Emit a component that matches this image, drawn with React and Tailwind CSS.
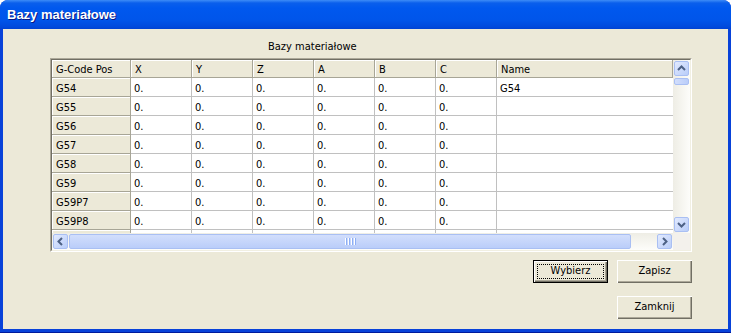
import React from "react";

const rows = ["G54", "G55", "G56", "G57", "G58", "G59", "G59P7", "G59P8"];
const cols = ["X", "Y", "Z", "A", "B", "C"];

const Chevron = ({ dir }) => {
  if (dir === "left" || dir === "right") {
    return (
      <svg width="9" height="11" viewBox="0 0 9 11">
        <path d={dir === "left" ? "M6 2 L2.5 5.5 L6 9" : "M3 2 L6.5 5.5 L3 9"} fill="none" stroke="#4D6185" strokeWidth="2" />
      </svg>
    );
  }
  return (
    <svg width="11" height="9" viewBox="0 0 11 9">
      <path d={dir === "up" ? "M2 6 L5.5 2.5 L9 6" : "M2 3 L5.5 6.5 L9 3"} fill="none" stroke="#4D6185" strokeWidth="2" />
    </svg>
  );
};

const ScrollBtn = ({ dir }) => (
  <div className="w-[17px] h-[17px] p-[1px] shrink-0">
    <div className="w-full h-full rounded-[2px] border border-[#A9BFF3] bg-[linear-gradient(135deg,#E2EAFE,#B9CDF9)] flex items-center justify-center">
      <Chevron dir={dir} />
    </div>
  </div>
);

const Btn = ({ children, def }) => (
  <div className={`relative w-[75px] h-[23px] bg-[#ECE9D8] ${def ? "border border-black" : ""}`}>
    <div className="h-full flex items-center justify-center text-[11px] text-black shadow-[inset_1px_1px_0_#fff,inset_-1px_-1px_0_#716F64,inset_-2px_-2px_0_#ACA899]">
      {children}
    </div>
    {def && <div className="absolute inset-[3px] border border-dotted border-black" />}
  </div>
);

export default function App() {
  return (
    <div className="w-[731px] h-[333px] flex flex-col rounded-t-[8px] overflow-hidden bg-[#0842D9] shadow-[inset_0_-1px_0_#001A9C] font-['DejaVu_Sans_Condensed','DejaVu_Sans',sans-serif]">
      {/* TITLE BAR */}
      <div className="h-[29px] shrink-0 flex items-center pl-[7px] bg-[linear-gradient(to_bottom,#3D8CF7_0px,#0A5FEC_3px,#0058EE_8px,#0055EA_20px,#0049DC_27px,#0042D2_29px)]">
        <span className="text-white font-bold text-[13px] font-['Liberation_Sans',sans-serif] [text-shadow:1px_1px_0_#0A1883]">
          Bazy materiałowe
        </span>
      </div>

      {/* CLIENT AREA */}
      <div className="flex-1 mx-[3px] mb-[4px] bg-[#ECE9D8] flex flex-col">
        <div className="pl-[265px] pt-[11px] h-[23px] text-[11px] leading-[13px] text-black">Bazy materiałowe</div>

        {/* GRID FRAME */}
        <div className="ml-[47px] mt-[6px] w-[642px] h-[194px] border border-t-[#ACA899] border-l-[#ACA899] border-r-white border-b-white">
          <div className="h-full border border-t-[#716F64] border-l-[#716F64] border-r-[#F1EFE2] border-b-[#F1EFE2] flex flex-col">
            <div className="flex h-[173px]">
              <div className="w-[621px] overflow-hidden text-[11px] leading-[13px] text-black">
                <div className="grid grid-cols-[79px_repeat(6,61px)_1fr] h-[18px]">
                  {["G-Code Pos", ...cols, "Name"].map((h) => (
                    <div key={h} className="flex items-center pl-[4px] pt-[2px] bg-[#ECE9D8] border-r border-b border-[#A7A596] shadow-[inset_1px_1px_0_#fff] whitespace-nowrap">
                      {h}
                    </div>
                  ))}
                </div>
                {rows.map((r, i) => (
                  <div key={r} className="grid grid-cols-[79px_repeat(6,61px)_1fr] h-[19px]">
                    <div className="flex items-center pl-[4px] pt-[2px] bg-[#ECE9D8] border-r border-b border-[#A7A596] shadow-[inset_1px_1px_0_#fff]">{r}</div>
                    {cols.map((c) => (
                      <div key={c} className="flex items-center pl-[3px] pt-[2px] bg-white border-r border-b border-[#C0C0C0]">0.</div>
                    ))}
                    <div className="flex items-center pl-[3px] pt-[2px] bg-white border-b border-[#C0C0C0]">{i === 0 ? "G54" : ""}</div>
                  </div>
                ))}
                {/* partially visible next row */}
                <div className="grid grid-cols-[79px_repeat(6,61px)_1fr] h-[19px]">
                  <div className="bg-[#ECE9D8] border-r border-[#A7A596] shadow-[inset_1px_1px_0_#fff]" />
                  {cols.map((c) => (
                    <div key={c} className="bg-white border-r border-[#C0C0C0]" />
                  ))}
                  <div className="bg-white" />
                </div>
              </div>

              {/* VERTICAL SCROLLBAR */}
              <div className="w-[17px] flex flex-col bg-[linear-gradient(to_right,#EEEDE5,#FDFDFA)]">
                <ScrollBtn dir="up" />
                <div className="mx-[1px] h-[7px] mt-[1px] rounded-[2px] border border-[#A9BFF3] bg-[linear-gradient(to_right,#D2DEFC,#BACDF9)]" />
                <div className="flex-1" />
                <ScrollBtn dir="down" />
              </div>
            </div>

            {/* HORIZONTAL SCROLLBAR */}
            <div className="flex h-[17px]">
              <div className="w-[621px] flex bg-[linear-gradient(to_bottom,#EEEDE5,#FDFDFA)]">
                <ScrollBtn dir="left" />
                <div className="w-[562px] my-[1px] rounded-[2px] border border-[#A9BFF3] bg-[linear-gradient(to_bottom,#D2DEFC,#BACDF9)] flex items-center justify-center gap-[1px]">
                  {[0, 1, 2, 3].map((k) => (
                    <div key={k} className="flex">
                      <div className="w-[1px] h-[7px] bg-white" />
                      <div className="w-[1px] h-[7px] bg-[#8CAEF5]" />
                    </div>
                  ))}
                </div>
                <div className="flex-1" />
                <ScrollBtn dir="right" />
              </div>
              <div className="w-[17px] bg-[#F3F1EC]" />
            </div>
          </div>
        </div>

        {/* BUTTONS */}
        <div className="flex flex-col items-end pr-[36px]">
          <div className="flex gap-[9px] mt-[8px]">
            <Btn def>Wybierz</Btn>
            <Btn>Zapisz</Btn>
          </div>
          <div className="mt-[13px]">
            <Btn>Zamknij</Btn>
          </div>
        </div>
      </div>
    </div>
  );
}
